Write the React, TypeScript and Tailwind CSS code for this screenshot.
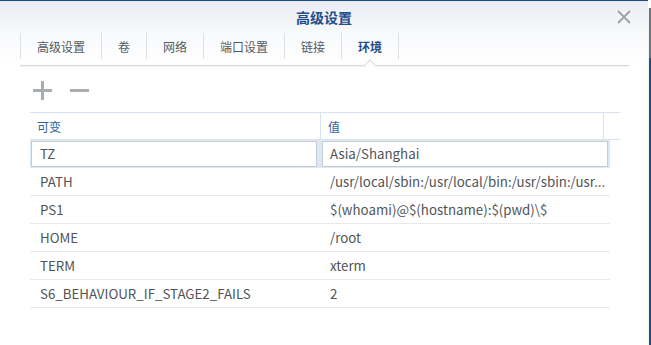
import { Fragment } from "react";

const tabs = ["高级设置", "卷", "网络", "端口设置", "链接", "环境"];

const rows: [string, string][] = [
  ["PATH", "/usr/local/sbin:/usr/local/bin:/usr/sbin:/usr..."],
  ["PS1", "$(whoami)@$(hostname):$(pwd)\\$"],
  ["HOME", "/root"],
  ["TERM", "xterm"],
  ["S6_BEHAVIOUR_IF_STAGE2_FAILS", "2"],
];

const font = "font-['Noto_Sans_CJK_SC',sans-serif]";

export default function App() {
  return (
    <div className={`flex h-[345px] w-[651px] overflow-hidden bg-white ${font}`}>
      <div className="flex min-w-0 flex-1 flex-col">
        <div className="h-px bg-[#1b4b86]" />
        {/* title bar */}
        <div className="relative flex h-[32px] items-center justify-center bg-gradient-to-b from-[#e9edf2] to-[#f8f9fb]">
          <span className="text-[14px] font-bold text-[#1f4e8c]">高级设置</span>
          <svg className="absolute right-[17px] top-[9px]" width="14" height="14" viewBox="0 0 14 14">
            <path d="M1 1 L13 13 M13 1 L1 13" stroke="#9ea2a6" strokeWidth="1.8" />
          </svg>
        </div>

        {/* tabs */}
        <div className="bg-gradient-to-b from-[#f8f9fb] to-white pl-[20px] pr-[19px]">
          <div className="flex h-[26px] items-stretch">
            {tabs.map((t, i) => (
              <div
                key={t}
                className={`flex items-center border-l border-[#dde1e5] px-[16px] pt-px text-[12px] ${
                  i === tabs.length - 1
                    ? "border-r font-bold text-[#1f4e8c]"
                    : "text-[#555a60]"
                }`}
              >
                {t}
              </div>
            ))}
          </div>
          <div className="relative mt-[6px] h-px bg-[#d6dade] shadow-[0_1px_1px_rgba(0,0,0,0.06)]">
            <div className="absolute -top-[4px] left-[346px] h-[8px] w-[8px] rotate-45 border-l border-t border-[#d6dade] bg-white" />
          </div>
        </div>

        {/* toolbar */}
        <div className="flex h-[46px] items-center gap-[18px] pl-[33px] pt-[3px]">
          <svg width="19" height="19" viewBox="0 0 19 19">
            <path d="M9.5 0 V19 M0 9.5 H19" stroke="#a9adb2" strokeWidth="3" />
          </svg>
          <svg width="19" height="19" viewBox="0 0 19 19">
            <path d="M0 9.5 H19" stroke="#a9adb2" strokeWidth="3" />
          </svg>
        </div>

        {/* table */}
        <div className="ml-[30px] w-[590px]">
          <div className="grid h-[28px] grid-cols-[290px_283px_1fr] border-y border-[#d9e3ee] text-[12px] text-[#2f5f9e]">
            <div className="flex items-center pl-[7px] pt-px">可变</div>
            <div className="flex items-center border-l border-[#d9e3ee] pl-[7px] pt-px">值</div>
            <div className="border-l border-[#d9e3ee]" />
          </div>
          <div className="w-[580px] text-[13.3px] text-[#505459]">
            <div className="flex h-[28px] gap-[5px] bg-[#dde8f5] p-px">
              <div className="flex w-[286px] items-center border border-[#c6cbd1] bg-white pl-[8px]">TZ</div>
              <div className="flex w-[286px] items-center border border-[#c6cbd1] bg-white pl-[7px]">Asia/Shanghai</div>
            </div>
            {rows.map(([k, v]) => (
              <Fragment key={k}>
                <div className="flex h-[28px] items-center border-b border-[#e6eaee]">
                  <div className="w-[300px] pl-[10px]">{k}</div>
                  <div className="flex-1 truncate">{v}</div>
                </div>
              </Fragment>
            ))}
          </div>
        </div>
      </div>
      {/* right window edge */}
      <div className="flex w-[3px] flex-col">
        <div className="h-[8px] bg-white" />
        <div className="flex flex-1">
          <div className="w-px bg-[#f2f3f4]" />
          <div className="flex flex-1 flex-col">
            <div className="h-[50px] bg-[#6e7479]" />
            <div className="flex-1 bg-[#1d4f8c]" />
          </div>
        </div>
      </div>
    </div>
  );
}
